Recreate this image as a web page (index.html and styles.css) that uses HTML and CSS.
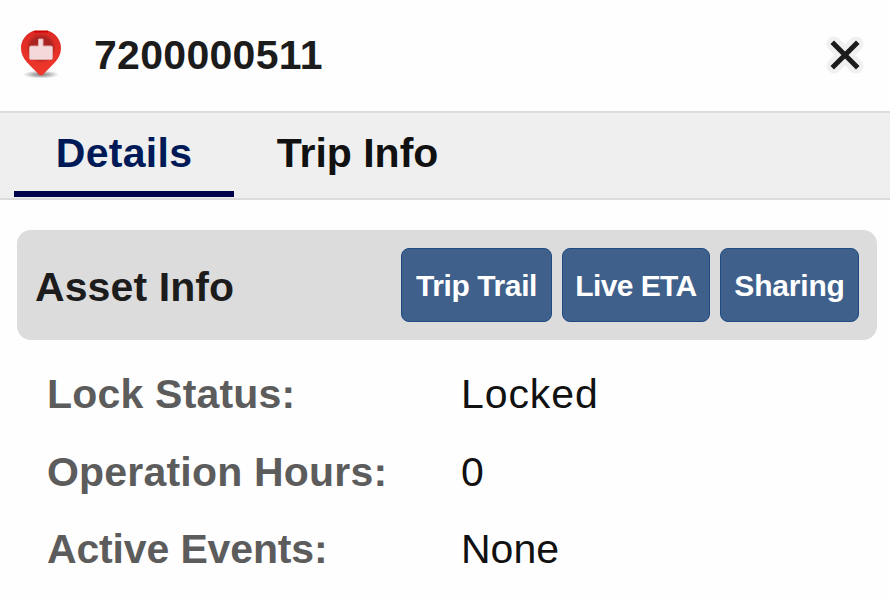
FILE: index.html
```
<!DOCTYPE html>
<html lang="en">
<head>
    <meta charset="UTF-8">
    <meta name="viewport" content="width=device-width, initial-scale=1.0">
    <title>7200000511</title>
    <link rel="stylesheet" href="styles.css">
</head>
<body>
    <div class="panel">
        <div class="header">
            <svg class="pin" width="50" height="54" viewBox="0 0 50 54">
                <defs>
                    <radialGradient id="shadow">
                        <stop offset="0" stop-color="#777"/>
                        <stop offset="1" stop-color="#777" stop-opacity="0"/>
                    </radialGradient>
                    <radialGradient id="dark">
                        <stop offset="0.7" stop-color="#a92321"/>
                        <stop offset="1" stop-color="#a92321" stop-opacity="0"/>
                    </radialGradient>
                    <linearGradient id="red" x1="0" y1="0" x2="0" y2="1">
                        <stop offset="0" stop-color="#dc2a24"/>
                        <stop offset="1" stop-color="#f0382c"/>
                    </linearGradient>
                </defs>
                <ellipse cx="25" cy="46.500" rx="18" ry="4" fill="url(#shadow)"/>
                <path d="M17 3h16c7 3 12 9 12 17 0 11-9 17-17 25.500-1.500 2.500-4.500 2.500-6 0C14 37 5 31 5 20 5 12 10 6 17 3z" fill="url(#red)"/>
                <path d="M18 3.500h14" stroke="#cf0000" stroke-width="2"/>
                <circle cx="25" cy="20" r="15" fill="url(#dark)"/>
                <path d="M22.500 11h4.500v7h8q1.500 0 1.500 1.500v10.500q0 1.500-1.500 1.500h-20q-1.500 0-1.500-1.500v-10.500q0-1.500 1.500-1.500h7.500z" fill="#f3d9da" stroke="#dfa9aa" stroke-width="1"/>
            </svg>
            <h1>7200000511</h1>
            <button class="close" aria-label="Close">
                <svg width="44" height="44" viewBox="0 0 44 44" stroke-linecap="round">
                    <path d="M11 11l22 22M33 11L11 33" stroke="#f0f0f0" stroke-width="15"/>
                    <path d="M11 11l22 22M33 11L11 33" stroke="#1c1c1c" stroke-width="5" stroke-linecap="square"/>
                </svg>
            </button>
        </div>

        <div class="tabs">
            <div class="tab active">Details</div>
            <div class="tab">Trip Info</div>
        </div>

        <div class="section-bar">
            <h2>Asset Info</h2>
            <div class="actions">
                <button class="button trail">Trip Trail</button>
                <button class="button eta">Live ETA</button>
                <button class="button sharing">Sharing</button>
            </div>
        </div>

        <dl class="info">
            <dt>Lock Status:</dt>
            <dd class="locked">Locked</dd>
            <dt>Operation Hours:</dt>
            <dd>0</dd>
            <dt class="events">Active Events:</dt>
            <dd>None</dd>
        </dl>
    </div>
</body>
</html>
```
FILE: styles.css
```
* {
    box-sizing: border-box;
}
body {
    margin: 0;
    background: #fefefe;
    font-family: "Liberation Sans", Arial, sans-serif;
    color: #1c1c1c;
    overflow: hidden;
}
.panel {
    width: 890px;
    height: 598px;
}
.header {
    height: 111px;
    display: flex;
    align-items: center;
    padding: 0 23px 2px 16px;
}
.pin {
    display: block;
}
h1, h2 {
    margin: 0;
    font-size: 41px;
    line-height: 48px;
    font-weight: bold;
}
h1 {
    margin-left: 28px;
    letter-spacing: 0.3px;
}
.close {
    margin-left: auto;
    padding: 0;
    border: none;
    background: none;
    height: 44px;
    cursor: pointer;
}
.tabs {
    display: flex;
    height: 89px;
    padding-left: 14px;
    background: #efefef;
    border-top: 2px solid #dcdcdc;
    border-bottom: 2px solid #dcdcdc;
}
.tab {
    width: 220px;
    height: 84px;
    border-bottom: 6px solid transparent;
    color: #111;
    font-size: 41px;
    font-weight: bold;
    line-height: 80px;
    text-align: center;
    white-space: nowrap;
}
.tab.active {
    color: #001a57;
    border-bottom-color: #00004b;
    letter-spacing: 0.3px;
}
.tab + .tab {
    width: 247px;
}
.section-bar {
    display: flex;
    align-items: center;
    justify-content: space-between;
    height: 110px;
    margin: 30px 13px 0 17px;
    padding: 0 18px;
    background: #dcdcdc;
    border-radius: 14px;
}
h2 {
    padding-top: 4px;
    letter-spacing: 0.1px;
}
.actions {
    display: flex;
    gap: 10px;
}
.button {
    height: 74px;
    padding: 1px 0 0;
    border: 1px solid #1f4b82;
    border-radius: 8px;
    background: #3f608b;
    color: #fff;
    font-family: inherit;
    font-size: 30px;
    font-weight: bold;
    letter-spacing: -0.4px;
    white-space: nowrap;
    cursor: pointer;
}
.trail {
    width: 151px;
}
.eta {
    width: 148px;
    letter-spacing: -0.6px;
}
.sharing {
    width: 139px;
    letter-spacing: -0.2px;
}
.info {
    display: grid;
    grid-template-columns: 414px 1fr;
    grid-auto-rows: 77.5px;
    margin: 15px 0 0;
    padding-left: 47px;
    font-size: 41px;
    line-height: 78px;
    white-space: nowrap;
}
.info dt {
    color: #5c5c5c;
    font-weight: bold;
    letter-spacing: 0.2px;
}
.info .events {
    letter-spacing: -0.15px;
}
.info dd {
    margin: 0;
    color: #111;
}
.info .locked {
    letter-spacing: 0.9px;
}
```
